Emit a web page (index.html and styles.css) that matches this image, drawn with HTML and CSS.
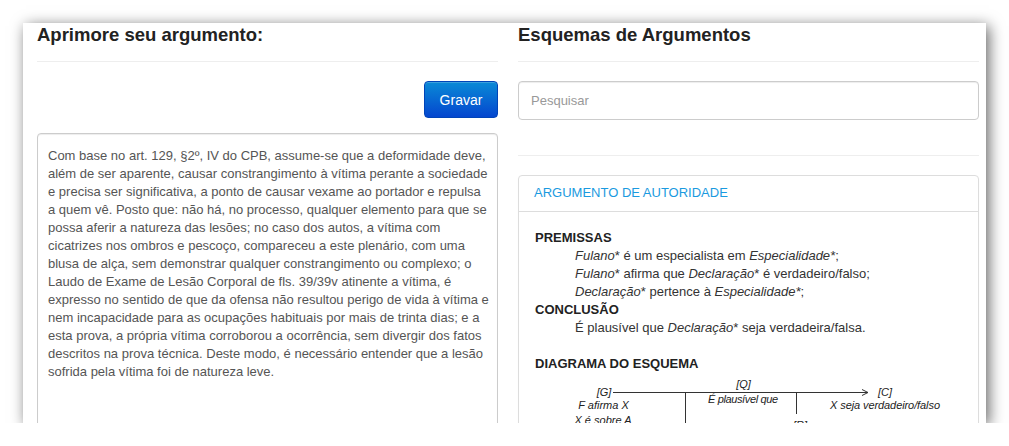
FILE: index.html
```html
<!DOCTYPE html>
<html lang="pt">
<head>
<meta charset="utf-8">
<title>Aprimore seu argumento</title>
<link rel="stylesheet" href="styles.css">
</head>
<body>
<div class="window">
  <section class="col">
    <div class="col-head"><h3 class="title">Aprimore seu argumento:</h3></div>
    <div class="actions"><button class="btn-primary" type="button">Gravar</button></div>
    <div class="editor">Com base no art. 129, §2º, IV do CPB, assume-se que a deformidade deve, além de ser aparente, causar constrangimento à vítima perante a sociedade e precisa ser significativa, a ponto de causar vexame ao portador e repulsa a quem vê. Posto que: não há, no processo, qualquer elemento para que se possa aferir a natureza das lesões; no caso dos autos, a vítima com cicatrizes nos ombros e pescoço, compareceu a este plenário, com uma blusa de alça, sem demonstrar qualquer constrangimento ou complexo; o Laudo de Exame de Lesão Corporal de fls. 39/39v atinente a vítima, é expresso no sentido de que da ofensa não resultou perigo de vida à vítima e nem incapacidade para as ocupações habituais por mais de trinta dias; e a esta prova, a própria vítima corroborou a ocorrência, sem divergir dos fatos descritos na prova técnica. Deste modo, é necessário entender que a lesão sofrida pela vítima foi de natureza leve.</div>
  </section>
  <section class="col">
    <div class="col-head"><h3 class="title">Esquemas de Argumentos</h3></div>
    <input class="search" type="text" placeholder="Pesquisar">
    <hr class="sep">
    <div class="card">
      <div class="card-head">ARGUMENTO DE AUTORIDADE</div>
      <div class="card-body">
        <div class="label">PREMISSAS</div>
        <div class="items">
          <div><i>Fulano</i>* é um especialista em <i>Especialidade*</i>;</div>
          <div><i>Fulano</i>* afirma que <i>Declaração</i>* é verdadeiro/falso;</div>
          <div><i>Declaração</i>* pertence à <i>Especialidade*</i>;</div>
        </div>
        <div class="label">CONCLUSÃO</div>
        <div class="items">
          <div>É plausível que <i>Declaração</i>* seja verdadeira/falsa.</div>
        </div>
        <div class="label spaced">DIAGRAMA DO ESQUEMA</div>
        <svg class="diagram" width="420" height="60" viewBox="0 0 420 60">
          <g stroke="#333" stroke-width="1" fill="none">
            <line x1="78" y1="18.5" x2="333" y2="18.5"/>
            <path d="M327 15.5 L333 18.5 L327 21.5"/>
            <line x1="150.5" y1="18.5" x2="150.5" y2="60"/>
            <line x1="261.5" y1="18.5" x2="261.5" y2="40"/>
          </g>
          <g class="dtext" text-anchor="middle">
            <text x="69" y="22">[G]</text>
            <text x="208.5" y="14">[Q]</text>
            <text x="350" y="22">[C]</text>
            <text x="68.5" y="35">F afirma X</text>
            <text x="68" y="50">X é sobre A</text>
            <text x="208" y="29" textLength="70">É plausível que</text>
            <text x="350" y="35" textLength="110">X seja verdadeiro/falso</text>
            <text x="265" y="55">[R]</text>
          </g>
        </svg>
      </div>
    </div>
  </section>
</div>
</body>
</html>
```
FILE: styles.css
```css
html, body {
  margin: 0;
  padding: 0;
  background: #fff;
}
body {
  font-family: "Liberation Sans", Arial, sans-serif;
  font-size: 13px;
  line-height: 18px;
  color: #333;
}
.window {
  margin: 23px 0 0 23px;
  width: 963px;
  height: 400px;
  overflow: hidden;
  background: #fff;
  box-shadow: 3px 3px 14px rgba(0, 0, 0, 0.6);
  box-sizing: border-box;
  padding: 0 7px 0 14px;
  display: grid;
  grid-template-columns: 461px 461px;
  column-gap: 20px;
  align-items: start;
}
.col {
  display: flex;
  flex-direction: column;
}
.col-head {
  padding: 1px 0 15px;
  border-bottom: 1px solid #eee;
}
.title {
  margin: 0;
  font-size: 18.5px;
  line-height: 22px;
  font-weight: bold;
  color: #222;
}
.actions {
  display: flex;
  justify-content: flex-end;
  margin-top: 19px;
}
.btn-primary {
  width: 74px;
  height: 37px;
  border: 1px solid #0044b8;
  border-radius: 4px;
  background: linear-gradient(to bottom, #0a8ad6, #0446cf);
  color: #fff;
  font-family: "Liberation Sans", Arial, sans-serif;
  font-size: 14px;
  padding: 0;
  box-shadow: inset 0 1px 0 rgba(255, 255, 255, 0.2);
}
.editor {
  margin-top: 15px;
  height: 320px;
  border: 1px solid #ccc;
  border-radius: 4px;
  padding: 13px 7px 6px 10px;
  color: #555;
  box-shadow: inset 0 1px 1px rgba(0, 0, 0, 0.075);
}
.search {
  margin: 19px 0 0;
  height: 39px;
  box-sizing: border-box;
  border: 1px solid #ccc;
  border-radius: 4px;
  padding: 0 12px;
  font-family: "Liberation Sans", Arial, sans-serif;
  font-size: 13px;
  color: #555;
  box-shadow: inset 0 1px 1px rgba(0, 0, 0, 0.075);
}
.search::placeholder {
  color: #999;
}
.sep {
  margin: 35px 0 0;
  border: 0;
  border-top: 1px solid #eee;
  height: 0;
}
.card {
  margin-top: 19px;
  border: 1px solid #ddd;
  border-radius: 4px;
  box-shadow: 0 1px 1px rgba(0, 0, 0, 0.05);
}
.card-head {
  padding: 8px 15px 9px;
  border-bottom: 1px solid #ddd;
  color: #1a9ae0;
}
.card-body {
  padding: 17px 16px 10px;
  color: #333;
}
.label {
  font-weight: bold;
  color: #222;
}
.label.spaced {
  margin-top: 18px;
}
.items {
  padding-left: 40px;
}
.diagram {
  display: block;
  margin-top: 1px;
}
.dtext {
  font-family: "Liberation Sans", Arial, sans-serif;
  font-style: italic;
  font-size: 11px;
  fill: #222;
}
```
